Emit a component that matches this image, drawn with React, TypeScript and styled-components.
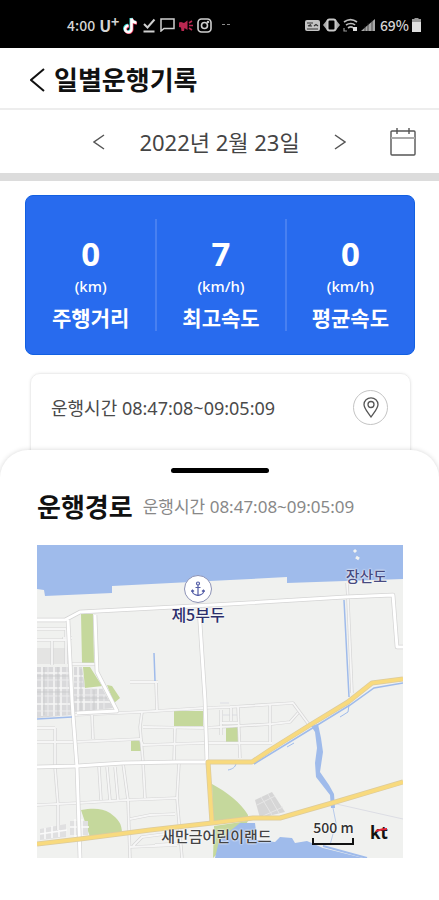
import React from 'react';
import styled, { createGlobalStyle } from 'styled-components';

const GlobalStyle = createGlobalStyle`
  * { box-sizing: border-box; }
  body {
    margin: 0;
    background: #fff;
    color: #111;
    font-family: "Noto Sans", "Noto Sans CJK KR", sans-serif;
  }
  button { font: inherit; color: inherit; cursor: pointer; }
  h1, h2, p, dl, dt, dd { margin: 0; }
`;

const Screen = styled.div`
  min-height: 100vh;
  display: flex;
  flex-direction: column;
  background: #fff;
  overflow: hidden;
`;

const StatusBar = styled.div`
  display: flex;
  align-items: center;
  justify-content: space-between;
  height: 48px;
  padding: 2px 18px 0 67px;
  background: #000;
  color: #d4d4d4;
  font-family: "Noto Sans CJK KR", sans-serif;
  font-size: 14px;
  line-height: 20px;
  font-weight: 500;
`;

const StatusGroup = styled.div<{ $gap: number }>`
  display: flex;
  align-items: center;
  gap: ${(p) => p.$gap}px;
  white-space: nowrap;
`;

const Carrier = styled.span`
  display: flex;
  font-size: 16px;
  font-weight: 700;
  sup { font-size: 14px; line-height: 12px; }
`;

const IconButton = styled.button<{ $width: number; $height: number }>`
  display: flex;
  align-items: center;
  justify-content: center;
  width: ${(p) => p.$width}px;
  height: ${(p) => p.$height}px;
  padding: 0;
  border: 0;
  background: none;
`;

const Header = styled.header`
  display: flex;
  align-items: center;
  height: 62px;
  padding: 4px 24px 0;
  gap: 4px;
  border-bottom: 2px solid #ededed;
`;

const Title = styled.h1`
  font-size: 26px;
  line-height: 36px;
  font-weight: 700;
`;

const DateBar = styled.div`
  display: grid;
  grid-template-columns: 1fr auto 1fr;
  align-items: center;
  height: 71px;
  padding: 0 20px;
  border-bottom: 8px solid #dcdcdc;
`;

const DatePicker = styled.div`
  grid-column: 2;
  display: flex;
  align-items: center;
  gap: 28px;
  color: #444;
  font-size: 22px;
  line-height: 32px;
`;

const DateText = styled.time`
  white-space: nowrap;
`;

const CalendarSlot = styled.div`
  display: flex;
  justify-content: flex-end;
`;

const Content = styled.main`
  padding: 14px 24px 0 25px;
`;

const Stats = styled.dl`
  display: grid;
  grid-template-columns: repeat(3, 1fr);
  padding: 23px 0;
  border: 1px solid #1260e2;
  border-radius: 8px;
  background: #286bee;
  color: #fff;
`;

const Stat = styled.div`
  display: flex;
  flex-direction: column-reverse;
  align-items: center;
  gap: 7px;
  height: 112px;
  & + & { border-left: 2px solid #4880f1; }
`;

const StatLabel = styled.dt`
  font-size: 21px;
  line-height: 26px;
  font-weight: 700;
`;

const StatValue = styled.dd`
  display: flex;
  flex-direction: column;
  align-items: center;
  font-size: 33px;
  line-height: 40px;
  font-weight: 700;
  small {
    font-size: 15px;
    line-height: 24px;
    font-weight: 500;
  }
`;

const TripCard = styled.section`
  display: flex;
  justify-content: space-between;
  align-items: flex-start;
  height: 110px;
  margin: 18px 4px 0 5px;
  padding: 16px 22px 0 20px;
  border: 1px solid #eee;
  border-radius: 10px;
  box-shadow: 0 0 3px rgba(0, 0, 0, 0.08);
`;

const TripTime = styled.p`
  color: #4a4a4a;
  font-size: 18px;
  line-height: 36px;
`;

const PinButton = styled(IconButton)`
  border: 1px solid #c4c4c4;
  border-radius: 50%;
`;

const Sheet = styled.section`
  position: relative;
  flex: 1;
  margin-top: -33px;
  padding: 18px 36px 40px 37px;
  border-radius: 28px 28px 0 0;
  background: #fff;
  box-shadow: 0 0 5px rgba(0, 0, 0, 0.16);
`;

const Handle = styled.div`
  width: 98px;
  height: 5px;
  margin: 0 auto;
  border-radius: 3px;
  background: #000;
`;

const SheetHeading = styled.div`
  display: flex;
  align-items: center;
  gap: 10px;
  margin: 16px 0 20px;
  white-space: nowrap;
`;

const SheetTitle = styled.h2`
  font-size: 26px;
  line-height: 36px;
  font-weight: 700;
`;

const SheetTime = styled.p`
  color: #888;
  font-size: 17px;
  line-height: 36px;
`;

const MapFrame = styled.div`
  position: relative;
`;

const MapDrawing = styled.svg`
  display: block;
  width: 100%;
  height: auto;
`;

const MapLabel = styled.span<{ $x: number; $y: number; $size: number; $color: string }>`
  position: absolute;
  left: ${(p) => p.$x}%;
  top: ${(p) => p.$y}%;
  transform: translate(-50%, -50%);
  color: ${(p) => p.$color};
  font-family: "Noto Sans CJK KR", sans-serif;
  font-size: ${(p) => p.$size}px;
  line-height: 20px;
  font-weight: 500;
  white-space: nowrap;
  text-shadow: 0 0 2px #fff, 0 0 2px #fff;
`;

const AnchorPin = styled.div`
  position: absolute;
  left: 44%;
  top: 14%;
  transform: translate(-50%, -50%);
  display: flex;
  align-items: center;
  justify-content: center;
  width: 28px;
  height: 28px;
  border: 1px solid #8c92b5;
  border-radius: 50%;
  background: #fff;
`;

const Scale = styled.div`
  position: absolute;
  left: 75%;
  bottom: 4%;
  width: 42px;
  height: 7px;
  border: 2px solid #111;
  border-top: 0;
`;

const KtMark = styled.strong`
  position: absolute;
  left: 91%;
  bottom: 4%;
  color: #111;
  font-size: 17px;
  line-height: 24px;
  svg { position: absolute; left: 5px; top: 6px; }
`;

const Chevron = ({ dir, w, h, color, stroke }: { dir: 'left' | 'right'; w: number; h: number; color: string; stroke: number }) => (
  <svg width={w} height={h} viewBox={`0 0 ${w} ${h}`} fill="none" stroke={color} strokeWidth={stroke} aria-hidden>
    <path d={dir === 'left' ? `M${w - 1} 1 L1 ${h / 2} L${w - 1} ${h - 1}` : `M1 1 L${w - 1} ${h / 2} L1 ${h - 1}`} />
  </svg>
);

const TikTokIcon = () => (
  <svg width="15" height="17" viewBox="0 0 15 17" fill="none" strokeWidth="3" aria-hidden>
    <path d="M8 1V11.5A3.2 3.2 0 1 1 5 8.3M8 1C8.5 4 10 5 13 5.2" stroke="#35ddd9" />
    <path d="M9 2V12.5A3.2 3.2 0 1 1 6 9.3M9 2C9.5 5 11 6 14 6.2" stroke="#ed365b" />
    <path d="M8.500 1.500V12A3.200 3.200 0 1 1 5.500 8.800M8.500 1.500C9 4.500 10.500 5.500 13.500 5.700" stroke="#fff" strokeWidth="2.600" />
  </svg>
);

const DoneIcon = () => (
  <svg width="14" height="15" viewBox="0 0 14 15" fill="none" stroke="#cfcfcf" strokeWidth="2" aria-hidden>
    <path d="M2 6L5.500 9.500L12.500 1.500M1.500 13.500H12.500" />
  </svg>
);

const ChatIcon = () => (
  <svg width="15" height="14" viewBox="0 0 15 14" fill="none" stroke="#cfcfcf" strokeWidth="1.500" aria-hidden>
    <path d="M1 13V1H14V10.500H4Z" />
  </svg>
);

const MegaphoneIcon = () => (
  <svg width="14" height="13" viewBox="0 0 14 13" fill="#b92750" aria-hidden>
    <path d="M0 3.500L2 3L5 4L8.500 1.500V11L5.500 9L5 12H2.500L2 8.500L0 8Z" />
    <path d="M10 4L13 2M10 6.500H14M10 9L13 11" stroke="#b92750" strokeWidth="1.600" />
  </svg>
);

const CameraIcon = () => (
  <svg width="15" height="15" viewBox="0 0 15 15" fill="none" stroke="#cfcfcf" strokeWidth="1.600" aria-hidden>
    <rect x="1" y="1" width="13" height="13" rx="3.500" />
    <circle cx="7.500" cy="7.500" r="3" />
    <circle cx="11" cy="4" r=".5" />
  </svg>
);

const MoreIcon = () => (
  <svg width="14" height="3" viewBox="0 0 14 3" fill="#8a8a8a" aria-hidden>
    <path d="M6 0H9V1H6ZM11 0H14V1H11Z" />
  </svg>
);

const SystemIcons = () => (
  <svg width="72" height="16" viewBox="0 0 72 16" fill="none" aria-hidden>
    <rect x="0" y="3" width="15" height="11" rx="2" fill="#c4c4c4" />
    <path d="M2 6H8M3 9L6 7.500M3 9H7M9 9L11 7.500L13 9M2 12H13" stroke="#333" strokeWidth="1.200" />
    <path d="M18 8L22 3V13ZM35 8L31 3V13Z" fill="#aaa" />
    <rect x="22.500" y="2.500" width="8" height="11" rx="2" stroke="#c8c8c8" strokeWidth="2" />
    <path d="M39 5C43 2 48 2 52 5M41 8C44 6 48 6 50 8M43 11C45 9.500 47 9.500 48 11" stroke="#bbb" strokeWidth="1.600" />
    <path d="M39 11V14H42" stroke="#999" strokeWidth="1.200" />
    <rect x="48" y="10" width="4" height="4" fill="#ddd" />
    <path d="M56 14L70 2V14Z" fill="#a8a8a8" />
    <path d="M60 9V14M63 6V14M67 3V14" stroke="#222" strokeWidth=".700" />
  </svg>
);

const BatteryIcon = () => (
  <svg width="9" height="14" viewBox="0 0 9 14" aria-hidden>
    <path d="M2.500 0H6.500V1H9V14H0V1H2.500Z" fill="#999" />
    <path d="M0 4H9V14H0Z" fill="#dedede" />
  </svg>
);

const CalendarIcon = () => (
  <svg width="26" height="28" viewBox="0 0 26 28" fill="none" stroke="#555" strokeWidth="1.400" aria-hidden>
    <rect x="1" y="3" width="24" height="24" rx="1" />
    <path d="M1 10H25" stroke="#aaa" strokeWidth="2" />
    <path d="M7 0V6M19 0V6" />
  </svg>
);

const PinIcon = () => (
  <svg width="16" height="21" viewBox="0 0 16 21" fill="none" stroke="#555" strokeWidth="1.300" aria-hidden>
    <path d="M8 20C5 15.500 1 11.500 1 7.500A7 6.700 0 0 1 15 7.500C15 11.500 11 15.500 8 20Z" />
    <circle cx="8" cy="7.500" r="3" />
  </svg>
);

const AnchorIcon = () => (
  <svg width="14" height="16" viewBox="0 0 14 16" fill="none" stroke="#535da6" strokeWidth="1.200" aria-hidden>
    <circle cx="7" cy="2.500" r="1.500" />
    <path d="M7 4V14.500M4.500 6.500H9.500M1.500 9V11C2 13.500 5 14 7 14.500C9 14 12 13.500 12.500 11V9M0 10.500L1.500 9L3 10.500M11 10.500L12.500 9L14 10.500" />
  </svg>
);

const minorRoads = [
  'M0 84H29V119M0 95H34M15 95V120M27 92V94M35 119H58M35 93H29',
  'M0 183H18M38 170L103 167L166 163L193 162L256 158L273 181',
  'M0 197H38L103 194L106 200L166 198L235 198',
  'M105 167L103 182L106 217L108 253M106 182L166 183L235 179L253 177L261 168',
  'M55 170L56 194M138 182L137 217L142 218L140 253L145 313',
  'M18 183V222L21 260V285M86 218L91 255L93 313',
  'M62 222L64 255M70 222L73 255M78 222L81 255',
  'M0 260L41 258L90 255L140 253',
  'M119 138L120 165M93 137H121',
  'M93 274L113 270L138 269M93 302L140 300M96 301L105 292L128 289M118 300L145 298',
  'M201 162L203 213M233 160V198M183 178H201',
  'M310 38L311 55L315 148M184 165V190M194 163V176',
];

const majorRoads = [
  'M0 75H28L43 67L193 59L308 52L356 50L360 102H366',
  'M162 63L168 155L170 217',
  'M31 75L35 155L36 170L40 222L43 313',
  'M58 70L60 127L80 166L40 168',
  'M0 222L40 221L86 218L140 217H170',
];

const highways = [
  'M0 299L43 294L113 285L175 278L216 273H243L295 258L366 237',
  'M175 278L171 217H215L233 205L273 180L311 157L335 138L366 134',
];

const Strokes = ({ paths, casing, fill, outer, inner }: { paths: string[]; casing: string; fill: string; outer: number; inner: number }) => (
  <g fill="none" strokeLinejoin="round">
    {paths.map((d) => <path key={`c${d}`} d={d} stroke={casing} strokeWidth={outer} />)}
    {paths.map((d) => <path key={d} d={d} stroke={fill} strokeWidth={inner} />)}
  </g>
);

const RouteMap = () => (
  <MapDrawing viewBox="0 0 366 313" role="img" aria-label="운행경로 지도">
    <rect width="366" height="313" fill="#f0f1ef" />
    <path d="M0 0H366V34L308 36L250 38V32L193 35L75 41V48L8 51L7 45L0 44Z" fill="#9fbbeb" />
    <path d="M317 5L319 7M319 12L322 14" stroke="#f3f4f2" strokeWidth="3" />
    <path d="M0 103H14V119H0ZM16 103H29V119H16Z" fill="#e4e4e3" />
    <path d="M0 122H34V170L0 173ZM37 122H45L48 143H65L76 163L37 167Z" fill="#d9d9db" />
    <path d="M0 128H34M0 143H34M0 159H34M5 122V171M17 122V171M24 122V171M41 122V166M47 143V166M61 143V165M37 131H46M37 143H65M37 157H73" stroke="#f6f6f6" strokeWidth="1.500" />
    <path d="M0 135H34M0 151H34M0 166H34M11 122V171M30 122V170M54 143V166M67 150V165M37 137H46M37 150H69" stroke="#ececed" strokeWidth="1" />
    <path d="M7 122V170M21 122V170M44 124V166M57 145V165M0 147H34M0 131H34M39 153H70" stroke="#c6c7c9" strokeWidth=".700" />
    <g fill="#c5d89c">
      <path d="M44 69H56L57 118H45ZM46 122H53L65 141L48 143ZM70 140L75 141L83 153L77 158ZM137 166H166V181H137ZM94 194H104V206H94ZM189 182H201V197H189Z" />
      <path d="M44 265C56 263 65 263 73 268C81 274 85 278 85 289L53 292ZM175 239C190 247 204 258 211 270V276L176 278ZM177 281L211 276L204 287L186 295L181 308L176 313Z" />
    </g>
    <path d="M178 313L182 296L193 286L203 278H218L220 295L238 297L243 292L255 293L258 298L270 296L286 303L326 313Z" fill="#9fbbeb" />
    <path d="M286 301L330 313" stroke="#9fbbeb" strokeWidth="2" />
    <path d="M218 255L235 247L248 267L223 273Z" fill="#d6d6d6" />
    <path d="M220 260L238 251M226 271L246 262M224 252L235 270M231 249L242 268" stroke="#e6e6e6" />
    <path d="M33 276H51V290H33ZM3 284L29 279V292L3 295Z" fill="#e0e0e1" />
    <path d="M38 274V292M45 274V292M33 282H52M8 283V294M15 281V293M22 280V292M3 289L30 285" stroke="#fafafa" strokeWidth="1.500" />
    <path d="M295 258L366 274M183 158H192M186 170H200" fill="none" stroke="#dcdde4" />
    <Strokes paths={minorRoads} casing="#d6d6d6" fill="#f6f6f6" outer={3.2} inner={1.8} />
    <Strokes paths={majorRoads} casing="#d4d4d4" fill="#ffffff" outer={4.4} inner={3} />
    <g fill="none" stroke="#9fbbeb" strokeWidth="1.500">
      <path d="M0 174L35 172M117 108L118 136M307 55L312 152M217 219L274 184L313 160L337 143L366 138" />
      <path d="M191 225C196 224 198 222 199 219M303 172L311 167L312 160M250 202L257 198" strokeWidth="1" />
    </g>
    <path d="M274 181L281 179L284 193L286 207L283 227L292 240L297 249L298 263L294 263L293 250L279 232L278 218L280 203L278 187Z" fill="#9fbbeb" />
    <path d="M296 263L299 278L293 300" fill="none" stroke="#b7caeb" strokeWidth="1" />
    <Strokes paths={highways} casing="#dccb9d" fill="#f8da7e" outer={5} inner={3.6} />
  </MapDrawing>
);

const stats = [
  { value: '0', unit: '(km)', label: '주행거리' },
  { value: '7', unit: '(km/h)', label: '최고속도' },
  { value: '0', unit: '(km/h)', label: '평균속도' },
];

export default function App() {
  return (
    <>
      <GlobalStyle />
      <Screen>
        <StatusBar>
          <StatusGroup $gap={4}>
            <span>4:00</span>
            <Carrier>U<sup>+</sup></Carrier>
            <TikTokIcon />
            <DoneIcon />
            <ChatIcon />
            <MegaphoneIcon />
            <CameraIcon />
            <MoreIcon />
          </StatusGroup>
          <StatusGroup $gap={3}>
            <SystemIcons />
            <span>69%</span>
            <BatteryIcon />
          </StatusGroup>
        </StatusBar>
        <Header>
          <IconButton $width={26} $height={40} aria-label="뒤로">
            <Chevron dir="left" w={15} h={24} color="#111" stroke={2} />
          </IconButton>
          <Title>일별운행기록</Title>
        </Header>
        <DateBar>
          <DatePicker>
            <IconButton $width={24} $height={40} aria-label="이전 날짜">
              <Chevron dir="left" w={12} h={16} color="#555" stroke={1.5} />
            </IconButton>
            <DateText dateTime="2022-02-23">2022년 2월 23일</DateText>
            <IconButton $width={24} $height={40} aria-label="다음 날짜">
              <Chevron dir="right" w={12} h={16} color="#555" stroke={1.5} />
            </IconButton>
          </DatePicker>
          <CalendarSlot>
            <IconButton $width={32} $height={40} aria-label="달력">
              <CalendarIcon />
            </IconButton>
          </CalendarSlot>
        </DateBar>
        <Content>
          <Stats>
            {stats.map((s) => (
              <Stat key={s.label}>
                <StatLabel>{s.label}</StatLabel>
                <StatValue>{s.value}<small>{s.unit}</small></StatValue>
              </Stat>
            ))}
          </Stats>
          <TripCard>
            <TripTime>운행시간 08:47:08~09:05:09</TripTime>
            <PinButton $width={35} $height={35} aria-label="운행경로 보기">
              <PinIcon />
            </PinButton>
          </TripCard>
        </Content>
        <Sheet>
          <Handle />
          <SheetHeading>
            <SheetTitle>운행경로</SheetTitle>
            <SheetTime>운행시간 08:47:08~09:05:09</SheetTime>
          </SheetHeading>
          <MapFrame>
            <RouteMap />
            <AnchorPin><AnchorIcon /></AnchorPin>
            <MapLabel $x={44} $y={22} $size={16} $color="#2c2f6b">제5부두</MapLabel>
            <MapLabel $x={90} $y={10} $size={15} $color="#474a80">장산도</MapLabel>
            <MapLabel $x={49} $y={93} $size={15} $color="#444">새만금어린이랜드</MapLabel>
            <MapLabel $x={81} $y={90} $size={14} $color="#333">500 m</MapLabel>
            <Scale />
            <KtMark>
              kt
              <svg width="13" height="6" viewBox="0 0 13 6" fill="none" stroke="#e02436" strokeWidth="2" aria-hidden>
                <path d="M1 4C4 3 8 2 12 2" />
              </svg>
            </KtMark>
          </MapFrame>
        </Sheet>
      </Screen>
    </>
  );
}
